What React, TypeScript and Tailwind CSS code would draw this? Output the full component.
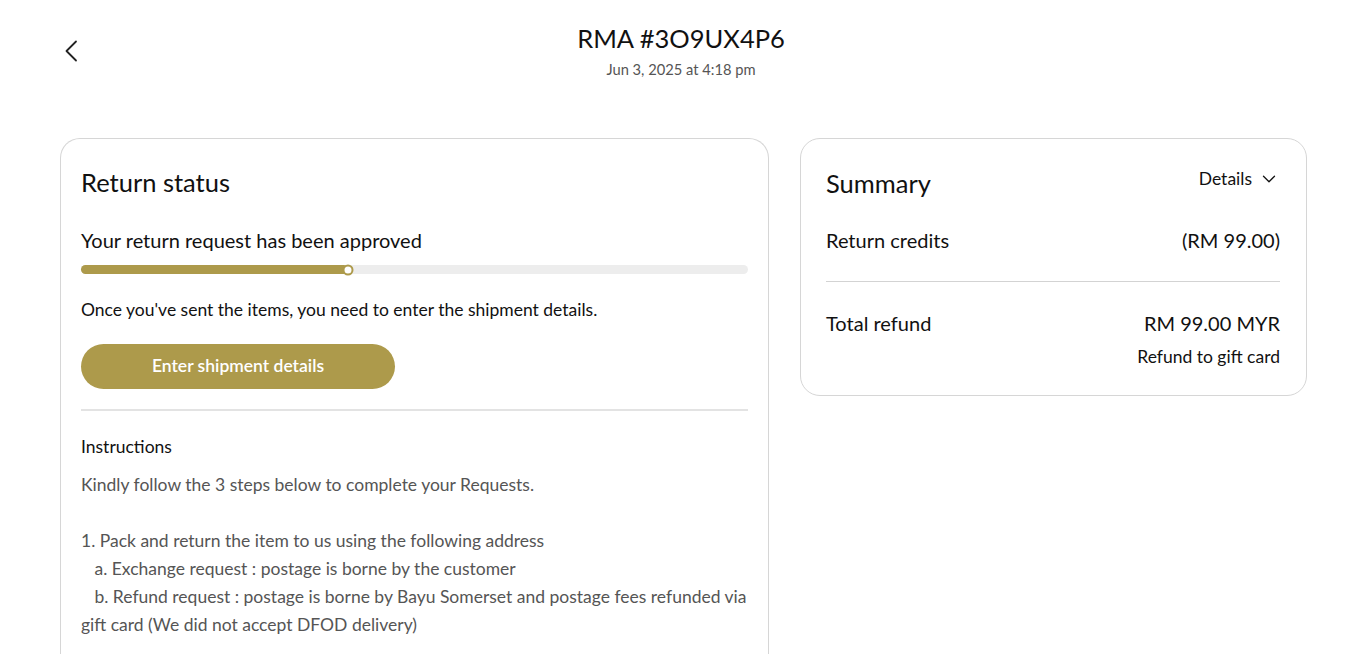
import { ChevronDown } from 'lucide-react'

const gold = 'bg-[#ad9a4b]'

const BackIcon = () => (
  <svg width="14" height="22" viewBox="0 0 14 22" fill="none" stroke="currentColor" strokeWidth="1.8" strokeLinecap="round" strokeLinejoin="round">
    <path d="M12 1.5 2.5 11 12 20.5" />
  </svg>
)

const ProgressBar = ({ percent }: { percent: number }) => (
  <div className="relative mt-3 h-[9px] w-full rounded-full bg-[#ededed]">
    <div className={`h-full rounded-full ${gold}`} style={{ width: `${percent}%` }} />
    <span
      className="absolute top-1/2 h-[11px] w-[11px] -translate-x-1/2 -translate-y-1/2 rounded-full border-2 border-[#ad9a4b] bg-white"
      style={{ left: `${percent}%` }}
    />
  </div>
)

const ReturnStatus = () => (
  <section className="w-[709px] rounded-t-[20px] border border-b-0 border-[#d6d6d6] px-[20px] pt-[27px] pb-6">
    <h2 className="text-[25.5px] leading-[32px] text-[#111]">Return status</h2>
    <p className="mt-[29px] text-[20px] leading-[26px] text-[#111]">Your return request has been approved</p>
    <ProgressBar percent={40} />
    <p className="mt-6 text-[17.5px] leading-[24px] text-[#111]">
      Once you've sent the items, you need to enter the shipment details.
    </p>
    <button className={`mt-[22px] h-[45px] w-[314px] rounded-full ${gold} text-[17.5px] font-semibold text-white`}>
      Enter shipment details
    </button>
    <hr className="mt-5 border-t-2 border-[#e3e3e3]" />
    <h3 className="mt-6 text-[17.5px] leading-[24px] text-[#111]">Instructions</h3>
    <div className="mt-3 text-[17.5px] leading-[28px] text-[#555]">
      <p>Kindly follow the 3 steps below to complete your Requests.</p>
      <p className="mt-7">1. Pack and return the item to us using the following address</p>
      <p>&nbsp;&nbsp;&nbsp;a. Exchange request : postage is borne by the customer</p>
      <p>
        &nbsp;&nbsp;&nbsp;b. Refund request : postage is borne by Bayu Somerset and postage fees refunded via gift card
        (We did not accept DFOD delivery)
      </p>
    </div>
  </section>
)

const Summary = () => (
  <section className="w-[507px] self-start rounded-[20px] border border-[#d6d6d6] pl-[25px] pr-[26px] pt-[28px] pb-[26px]">
    <div className="flex items-start justify-between">
      <h2 className="text-[25.5px] leading-[32px] text-[#111]">Summary</h2>
      <button className="flex items-center gap-1.5 text-[17.5px] leading-[24px] text-[#111]">
        Details
        <ChevronDown size={22} strokeWidth={1.4} />
      </button>
    </div>
    <div className="mt-7 flex justify-between text-[20px] leading-[26px] text-[#111]">
      <span>Return credits</span>
      <span>(RM 99.00)</span>
    </div>
    <hr className="mt-7 border-t border-[#d3d3d3]" />
    <div className="mt-7 flex justify-between text-[20px] leading-[26px] text-[#111]">
      <span>Total refund</span>
      <span>RM 99.00 MYR</span>
    </div>
    <p className="mt-[9px] text-right text-[17.5px] leading-[24px] text-[#111]">Refund to gift card</p>
  </section>
)

export default function App() {
  return (
    <div className="h-[654px] overflow-hidden bg-white font-['Lato',sans-serif]">
      <header className="relative flex flex-col items-center pt-[22px]">
        <button className="absolute left-[64px] top-[40px] text-[#222]">
          <BackIcon />
        </button>
        <h1 className="text-[25.5px] leading-[32px] text-[#111]">RMA #3O9UX4P6</h1>
        <p className="mt-[5px] text-[14.7px] leading-[20px] text-[#555]">Jun 3, 2025 at 4:18 pm</p>
      </header>
      <main className="mt-[59px] flex gap-[31px] pl-[60px]">
        <ReturnStatus />
        <Summary />
      </main>
    </div>
  )
}
